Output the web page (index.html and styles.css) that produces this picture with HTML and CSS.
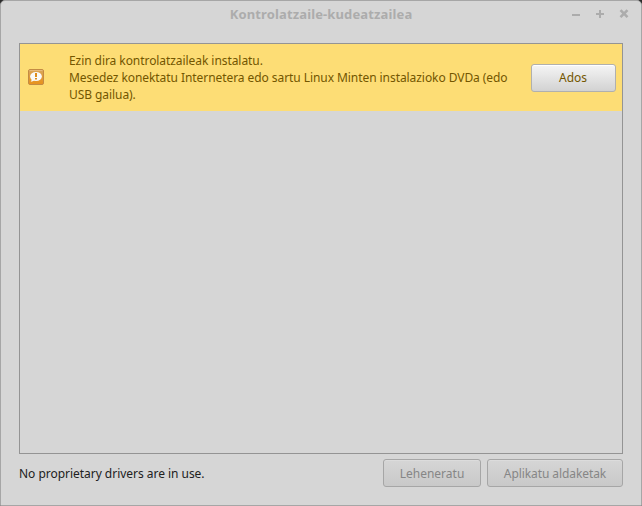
FILE: index.html
```html
<!DOCTYPE html>
<html lang="eu">
<head>
<meta charset="utf-8">
<title>Kontrolatzaile-kudeatzailea</title>
<link rel="stylesheet" href="styles.css">
</head>
<body>
<div class="window">
  <header class="titlebar">
    <h1 class="title">Kontrolatzaile-kudeatzailea</h1>
    <svg class="controls" width="60" height="12" viewBox="0 0 60 12">
      <path d="M2 8h8" stroke-width="2"/>
      <path d="M26 7h8M30 3v8" stroke-width="2"/>
      <path d="M50.500 3.200l7 7M57.500 3.200l-7 7" stroke-width="2.600"/>
    </svg>
  </header>
  <main class="drivers">
    <section class="infobar">
      <svg class="icon" width="16" height="16" viewBox="0 0 16 16">
        <defs>
          <linearGradient id="orange" x1="0" y1="0" x2="0" y2="1">
            <stop offset="0" stop-color="#d9a860"/>
            <stop offset=".5" stop-color="#e09a38"/>
            <stop offset="1" stop-color="#e8921c"/>
          </linearGradient>
        </defs>
        <rect x=".5" y=".5" width="15" height="15" rx="1.500" fill="url(#orange)" stroke="#c48b43"/>
        <path d="M1.500 1.500h13" stroke="#edc58d" opacity=".7"/>
        <ellipse cx="8" cy="7.500" rx="5.900" ry="4.500" fill="#fafafa"/>
        <path d="M3.500 9.500c.3 1.300 0 2.300-.8 3.200 1.500 0 2.700-.5 3.500-1.400z" fill="#fafafa"/>
        <path d="M7 4h2v4H7zM7 9h2v1.500H7z" fill="#de8d1c"/>
      </svg>
      <p class="message">Ezin dira kontrolatzaileak instalatu.<br>Mesedez konektatu Internetera edo sartu Linux Minten instalazioko DVDa (edo<br>USB gailua).</p>
      <button class="button ok">Ados</button>
    </section>
  </main>
  <footer class="footer">
    <span class="status">No proprietary drivers are in use.</span>
    <button class="button revert" disabled>Leheneratu</button>
    <button class="button apply" disabled>Aplikatu aldaketak</button>
  </footer>
</div>
</body>
</html>
```
FILE: styles.css
```css
* {
  box-sizing: border-box;
}

body {
  margin: 0;
  background: #2b2b2b;
  font: 12px/17px "Noto Sans", sans-serif;
  color: #212121;
}

.window {
  display: flex;
  flex-direction: column;
  width: 642px;
  height: 506px;
  padding: 0 18px;
  background: #d6d6d6;
  border: 1px solid #a6a6a6;
  border-radius: 5px 5px 0 0;
}

.titlebar {
  display: grid;
  grid-template-columns: 60px 1fr 60px;
  height: 42px;
  margin-right: -7px;
  margin-left: -7px;
  padding-top: 5px;
}

.title {
  grid-column: 2;
  margin: 0;
  font-size: 13px;
  font-weight: 700;
  line-height: 17px;
  letter-spacing: 0.13px;
  text-align: center;
  color: #acacac;
}

.controls {
  margin-top: 1px;
  fill: none;
  stroke: #acacac;
}

.drivers {
  height: 411px;
  border: 1px solid #949494;
}

.infobar {
  display: flex;
  align-items: center;
  height: 67px;
  padding: 0 6px 0 8px;
  background: #fddd75;
  color: #735600;
}

.icon {
  flex: none;
  margin-bottom: 1px;
}

.message {
  flex: 1;
  margin: 0 0 0 25px;
  letter-spacing: -0.066px;
  white-space: nowrap;
}

.button {
  height: 28px;
  padding: 0 0 1px;
  font: inherit;
  border: 1px solid #a9a9a9;
  border-radius: 3px;
}

.ok {
  width: 85px;
  padding-right: 1px;
  color: #735600;
  background: linear-gradient(#f5f5f5, #d2d2d2);
  border-color: #b0b0ae;
  box-shadow: inset 0 1px #fff;
}

.footer {
  display: flex;
  gap: 6px;
  margin-top: 5px;
  align-items: center;
}

.status {
  flex: 1;
  letter-spacing: -0.03px;
}

.revert,
.apply {
  padding: 1px 0 0;
  color: #868686;
  background: linear-gradient(#d6d6d6, #c9c9c9);
  border-color: #a6a6a6;
  box-shadow: inset 0 1px #dcdcdc;
}

.revert {
  width: 98px;
}

.apply {
  width: 136px;
  letter-spacing: -0.08px;
}
```
